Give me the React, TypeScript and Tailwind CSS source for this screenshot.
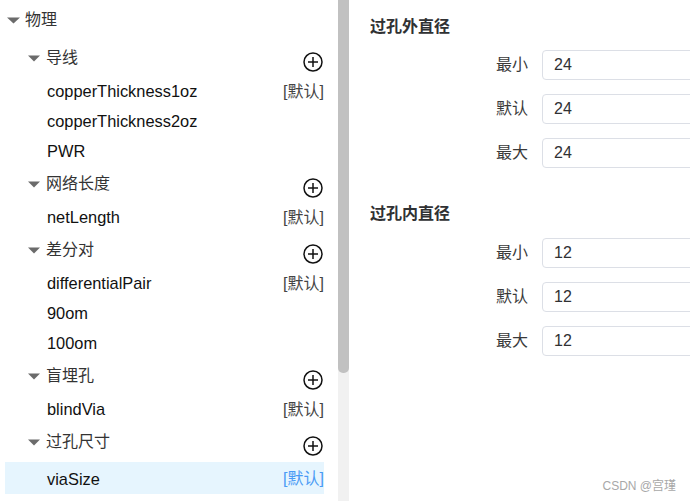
import React from "react";

type Row =
  | { kind: "header"; label: string }
  | { kind: "leaf"; label: string; def?: boolean; active?: boolean };

const rows: Row[] = [
  { kind: "header", label: "导线" },
  { kind: "leaf", label: "copperThickness1oz", def: true },
  { kind: "leaf", label: "copperThickness2oz" },
  { kind: "leaf", label: "PWR" },
  { kind: "header", label: "网络长度" },
  { kind: "leaf", label: "netLength", def: true },
  { kind: "header", label: "差分对" },
  { kind: "leaf", label: "differentialPair", def: true },
  { kind: "leaf", label: "90om" },
  { kind: "leaf", label: "100om" },
  { kind: "header", label: "盲埋孔" },
  { kind: "leaf", label: "blindVia", def: true },
  { kind: "header", label: "过孔尺寸" },
  { kind: "leaf", label: "viaSize", def: true, active: true },
];

const Caret = ({ w }: { w: number }) => (
  <svg width={w} height={7} viewBox={`0 0 ${w} 7`} className="shrink-0">
    <polygon points={`0,0.5 ${w},0.5 ${w / 2},6.5`} fill="#6b6b6b" />
  </svg>
);

const Plus = () => (
  <svg width={20} height={20} viewBox="0 0 20 20" className="mt-2 shrink-0">
    <circle cx="10" cy="10" r="9" fill="none" stroke="#111" strokeWidth="1.5" />
    <line x1="5" y1="10" x2="15" y2="10" stroke="#111" strokeWidth="1.5" />
    <line x1="10" y1="5" x2="10" y2="15" stroke="#111" strokeWidth="1.5" />
  </svg>
);

const Field = ({ label, value }: { label: string; value: string }) => (
  <div className="flex items-center h-[30px]">
    <div className="w-[158px] text-right text-[16px] text-[#3a3a3a]">{label}</div>
    <div className="ml-[14px] w-[200px] h-[30px] border border-[#dcdfe6] rounded-[4px] flex items-center pl-[11px] text-[16px] text-[#303133]">
      {value}
    </div>
  </div>
);

export default function App() {
  return (
    <div
      className="relative flex w-[690px] h-[501px] overflow-hidden bg-white"
      style={{ fontFamily: '"Liberation Sans", "Noto Sans CJK SC", sans-serif' }}
    >
      {/* Tree panel */}
      <div className="w-[338px] shrink-0 pl-[5px]">
        <div className="w-[319px]">
          <div className="flex items-center h-[40px] text-[16px] text-[#333]">
            <div className="ml-[2px]">
              <Caret w={13} />
            </div>
            <span className="ml-[5px]">物理</span>
          </div>
          {rows.map((r, i) =>
            r.kind === "header" ? (
              <div key={i} className="flex items-center h-[36px] text-[16px] text-[#333]">
                <div className="ml-[23px]">
                  <Caret w={12} />
                </div>
                <span className="ml-[6px] flex-1">{r.label}</span>
                <div className="mr-[1px]">
                  <Plus />
                </div>
              </div>
            ) : (
              <div
                key={i}
                className={`flex items-center text-[16.4px] pl-[42px] ${
                  r.active ? "h-[32px] bg-[#e6f5fe] pt-[2px] mt-[2px]" : "h-[30px] pt-[1px]"
                }`}
              >
                <span className="flex-1 text-[#111]">{r.label}</span>
                {r.def && (
                  <span className={`text-[16px] ${r.active ? "text-[#4a9bf5]" : "text-[#444]"}`}>[默认]</span>
                )}
              </div>
            )
          )}
        </div>
      </div>

      {/* Scrollbar */}
      <div className="w-[11px] shrink-0 flex flex-col bg-[#f1f1f1]">
        <div className="h-[373px] bg-[#c1c1c1] rounded-b-[5px]" />
      </div>

      {/* Form panel */}
      <div className="flex-1 pl-[21px] pt-[15px]">
        <div className="h-[24px] leading-[24px] text-[16px] font-bold text-[#303133]">过孔外直径</div>
        <div className="mt-[11px] flex flex-col gap-[14px]">
          <Field label="最小" value="24" />
          <Field label="默认" value="24" />
          <Field label="最大" value="24" />
        </div>
        <div className="mt-[34px] h-[24px] leading-[24px] text-[16px] font-bold text-[#303133]">过孔内直径</div>
        <div className="mt-[12px] flex flex-col gap-[14px]">
          <Field label="最小" value="12" />
          <Field label="默认" value="12" />
          <Field label="最大" value="12" />
        </div>
      </div>

      <div className="absolute right-[14px] bottom-[6px] text-[12px] text-[#a8a8a8]">CSDN @宫瑾</div>
    </div>
  );
}
